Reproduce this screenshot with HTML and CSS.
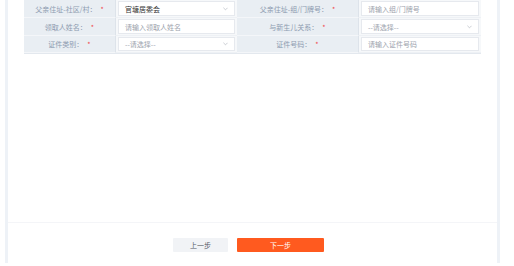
FILE: index.html
```html
<!DOCTYPE html>
<html lang="zh">
<head>
  <meta charset="UTF-8" />
  <meta name="viewport" content="width=device-width, initial-scale=1.0"/>
  <title>新生儿登记</title>
  <link rel="stylesheet" href="styles.css">
</head>
<body>
  <div class="frame">
    <div class="panel">
      <div class="form">
        <div class="grid">
          <div class="label">父亲住址-社区/村：<span class="req">*</span></div>
          <div class="cell"><div class="field select">官塘居委会<svg viewBox="0 0 6 4"><path d="M0.5 0.5 L3 3 L5.5 0.5" fill="none" stroke="#b8bcc4" stroke-width="0.9"/></svg></div></div>
          <div class="label">父亲住址-组/门牌号：<span class="req">*</span></div>
          <div class="cell"><div class="field ph">请输入组/门牌号</div></div>

          <div class="label">领取人姓名：<span class="req">*</span></div>
          <div class="cell"><div class="field ph">请输入领取人姓名</div></div>
          <div class="label">与新生儿关系：<span class="req">*</span></div>
          <div class="cell"><div class="field select ph">--请选择--<svg viewBox="0 0 6 4"><path d="M0.5 0.5 L3 3 L5.5 0.5" fill="none" stroke="#b8bcc4" stroke-width="0.9"/></svg></div></div>

          <div class="label">证件类别：<span class="req">*</span></div>
          <div class="cell"><div class="field select ph">--请选择--<svg viewBox="0 0 6 4"><path d="M0.5 0.5 L3 3 L5.5 0.5" fill="none" stroke="#b8bcc4" stroke-width="0.9"/></svg></div></div>
          <div class="label">证件号码：<span class="req">*</span></div>
          <div class="cell"><div class="field ph">请输入证件号码</div></div>
        </div>
      </div>
      <div class="footer">
        <button class="btn prev">上一步</button>
        <button class="btn next">下一步</button>
      </div>
    </div>
  </div>
</body>
</html>
```

FILE: styles.css
```css
body {
  margin: 0;
  background: #ffffff;
  font-family: "Noto Sans CJK SC", "Noto Sans", sans-serif;
}
.frame {
  margin-left: 5px;
  width: 489px;
  height: 263px;
  padding: 0 3px;
  background: #eef2f7;
}
.panel {
  height: 263px;
  background: #ffffff;
  display: flex;
  flex-direction: column;
}
.form {
  flex: 1;
  padding: 0 16px;
}
.grid {
  display: grid;
  grid-template-columns: 92px 121px 122px 122px;
  grid-template-rows: 18px 18px 17px;
  background: #e9eef3;
  border-bottom: 1px solid #e3e8ee;
}
.label {
  display: flex;
  align-items: center;
  justify-content: center;
  font-size: 7px;
  color: #8d9bb0;
  background: #e9eef3;
  border-bottom: 1px solid #f4f6f9;
  border-right: 1px solid #dde3ea;
}
.req {
  color: #f04848;
  margin-left: 4px;
}
.cell {
  background: #f6f8fa;
  padding: 1px 2px;
  border-bottom: 1px solid #eef1f5;
}
.field {
  height: 100%;
  box-sizing: border-box;
  background: #ffffff;
  border: 1px solid #e6e9ee;
  display: flex;
  align-items: center;
  padding: 0 6px;
  font-size: 7px;
  color: #333333;
}
.field.ph {
  color: #9da3ad;
}
.select {
  justify-content: space-between;
}
.select svg {
  width: 5px;
  height: 4px;
}
.footer {
  border-top: 1px solid #f4f5f8;
  height: 41px;
  display: flex;
  align-items: flex-start;
  padding: 15px 0 0 165px;
  box-sizing: border-box;
  gap: 9px;
}
.btn {
  height: 14px;
  border: none;
  border-radius: 1px;
  font-family: inherit;
  font-size: 7px;
  padding: 0;
  cursor: pointer;
}
.prev {
  width: 55px;
  background: #f1f3f6;
  color: #555b66;
}
.next {
  width: 87px;
  background: #ff5a1f;
  color: #ffffff;
}
```
